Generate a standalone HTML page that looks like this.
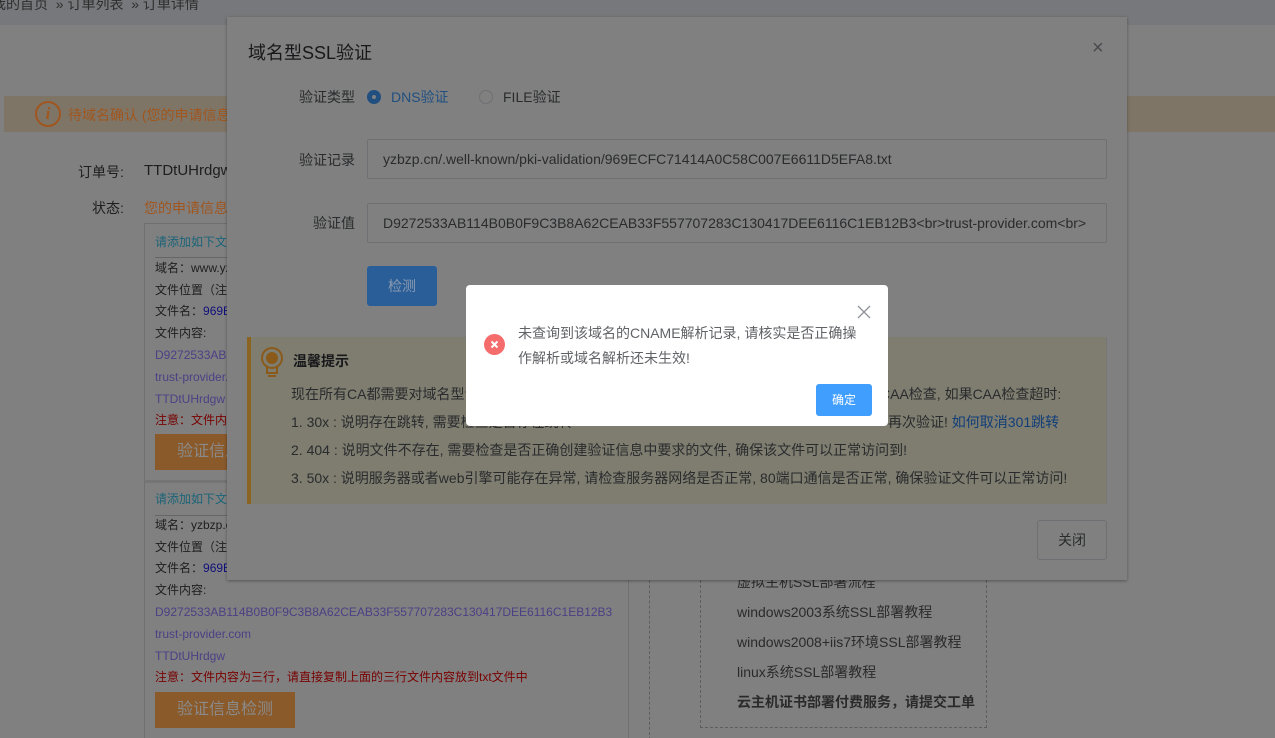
<!DOCTYPE html>
<html><head><meta charset="utf-8"><style>
*{margin:0;padding:0;box-sizing:border-box}
html,body{width:1275px;height:738px;overflow:hidden}
body{position:relative;background:#808080;font-family:"Liberation Sans","Noto Sans CJK SC",sans-serif;font-size:13px;color:#1e1e1e}
.a{position:absolute;white-space:nowrap}
</style></head><body>
<div class="a" style="left:0;top:0;width:1275px;height:25px;background:#77787b"></div>
<div class="a" style="left:-8px;top:-6px;font-size:14px;color:#2e2e2e">我的首页 &nbsp;» 订单列表 &nbsp;» 订单详情</div>
<div class="a" style="left:4px;top:96px;width:1271px;height:36px;background:#7f7566"></div>
<div class="a" style="left:35px;top:101px;width:26px;height:26px;border:2px solid #a0561e;border-radius:50%;color:#a0561e;font:italic bold 17px 'Liberation Serif',serif;text-align:center;line-height:22px">i</div>
<div class="a" style="left:68px;top:105px;font-size:14px;color:#a0561e">待域名确认 (您的申请信息</div>
<div class="a" style="left:78px;top:162px;font-size:14px">订单号:</div>
<div class="a" style="left:144px;top:162px;font-size:15px">TTDtUHrdgw</div>
<div class="a" style="left:92px;top:198px;font-size:14px">状态:</div>
<div class="a" style="left:144px;top:198px;font-size:14px;color:#a0561e">您的申请信息</div>
<div class="a" style="left:144px;top:223px;width:485px;height:530px;border:1px solid #6f6f6f"></div>
<div class="a" style="left:144px;top:480px;width:485px;height:3px;background:#747474"></div>
<div class="a" style="left:155px;top:257px;width:460px;height:1px;background:#666"></div>
<div class="a" style="left:155px;top:515px;width:460px;height:1px;background:#666"></div>
<div style="position:absolute;left:155px;top:232px;font-size:12px;line-height:21.8px">
<div style="color:#1a6478">请添加如下文件</div><div style="height:4px"></div>
<div>域名：www.yzbzp.cn</div><div>文件位置（注</div><div>文件名：<span style="color:#10107a">969E</span></div><div>文件内容:</div>
<div style="color:#4c3f85">D9272533AB114B0B0F9C3B8A62CEAB</div><div style="color:#4c3f85">trust-provider.com</div><div style="color:#4c3f85">TTDtUHrdgw</div><div style="color:#780000">注意：文件内容为三行</div>
</div>
<div class="a" style="left:155px;top:434px;width:115px;height:36px;background:#8a5a2a;color:#8a8a8a;font-size:16px;line-height:36px;padding-left:22px">验证信息检测</div>
<div style="position:absolute;left:155px;top:489px;font-size:12px;line-height:21.8px">
<div style="color:#1a6478">请添加如下文件</div><div style="height:4px"></div>
<div>域名：yzbzp.cn</div><div>文件位置（注</div><div>文件名：<span style="color:#10107a">969E</span></div><div>文件内容:</div>
<div style="color:#4c3f85">D9272533AB114B0B0F9C3B8A62CEAB33F557707283C130417DEE6116C1EB12B3</div><div style="color:#4c3f85">trust-provider.com</div><div style="color:#4c3f85">TTDtUHrdgw</div><div style="color:#780000">注意：文件内容为三行，请直接复制上面的三行文件内容放到txt文件中</div>
</div>
<div class="a" style="left:155px;top:692px;width:140px;height:36px;background:#8a5a2a;color:#8a8a8a;font-size:16px;line-height:36px;text-align:center">验证信息检测</div>
<div class="a" style="left:649px;top:560px;width:1px;height:180px;border-left:1px dashed #5e5e5e"></div>
<div class="a" style="left:700px;top:540px;width:287px;height:188px;border:1px dashed #5e5e5e"></div>
<div style="position:absolute;left:737px;top:567px;font-size:14px;line-height:30px;color:#2a2a2a">
<div>虚拟主机SSL部署流程</div><div>windows2003系统SSL部署教程</div><div>windows2008+iis7环境SSL部署教程</div><div>linux系统SSL部署教程</div><div style="font-weight:bold">云主机证书部署付费服务，请提交工单</div></div>
<div class="a" style="left:227px;top:17px;width:900px;height:563px;background:#808080;box-shadow:0 1px 3px rgba(0,0,0,.35)"></div>
<div class="a" style="left:248px;top:39px;font-size:18px;color:#18181a">域名型SSL验证</div>
<div class="a" style="left:1092px;top:37px;font-size:20px;color:#484a4d">×</div>
<div class="a" style="left:299px;top:87px;font-size:14px;color:#2a2b2d">验证类型</div>
<div class="a" style="left:367px;top:90px;width:14px;height:14px;border-radius:50%;background:#204f80"><div style="position:absolute;left:5px;top:5px;width:4px;height:4px;border-radius:50%;background:#808080"></div></div>
<div class="a" style="left:391px;top:87px;font-size:14px;color:#204f80">DNS验证</div>
<div class="a" style="left:479px;top:90px;width:14px;height:14px;border-radius:50%;border:1px solid #6e6f73"></div>
<div class="a" style="left:503px;top:87px;font-size:14px;color:#2a2b2d">FILE验证</div>
<div class="a" style="left:299px;top:150px;font-size:14px;color:#2a2b2d">验证记录</div>
<div class="a" style="left:367px;top:139px;width:740px;height:40px;border:1px solid #6e6f73;border-radius:2px;font-size:14px;color:#2a2b2d;line-height:38px;padding-left:15px;overflow:hidden">yzbzp.cn/.well-known/pki-validation/969ECFC71414A0C58C007E6611D5EFA8.txt</div>
<div class="a" style="left:313px;top:213px;font-size:14px;color:#2a2b2d">验证值</div>
<div class="a" style="left:367px;top:203px;width:740px;height:40px;border:1px solid #6e6f73;border-radius:2px;font-size:14px;color:#2a2b2d;line-height:38px;padding-left:15px;overflow:hidden">D9272533AB114B0B0F9C3B8A62CEAB33F557707283C130417DEE6116C1EB12B3&lt;br&gt;trust-provider.com&lt;br&gt;</div>
<div class="a" style="left:367px;top:266px;width:70px;height:40px;background:#2a5e98;border-radius:3px;color:#8a9ab0;font-size:14px;line-height:40px;text-align:center">检测</div>
<div class="a" style="left:247px;top:337px;width:860px;height:167px;background:#7e7d70;border-left:4px solid #8a6420;border-right:1px solid #777"></div>
<svg class="a" style="left:260px;top:346px" width="24" height="34" viewBox="0 0 24 34"><circle cx="12" cy="12" r="10" fill="none" stroke="#8a5a1a" stroke-width="2"/><circle cx="12" cy="12" r="6" fill="#8a5a1a"/><path d="M7 21v6h10v-6M8 30h8" stroke="#8a5a1a" stroke-width="2" fill="none"/></svg>
<div class="a" style="left:293px;top:351px;font-size:14px;font-weight:bold;color:#18181a">温馨提示</div>
<div style="position:absolute;left:291px;top:380px;font-size:14px;line-height:28px;color:#2a2b2d">
<div>现在所有CA都需要对域名型证书进行CAA检查</div>
<div>1. 30x : 说明存在跳转, 需要检查是否存在跳转</div>
<div>2. 404 : 说明文件不存在, 需要检查是否正确创建验证信息中要求的文件, 确保该文件可以正常访问到!</div>
<div>3. 50x : 说明服务器或者web引擎可能存在异常, 请检查服务器网络是否正常, 80端口通信是否正常, 确保验证文件可以正常访问!</div></div>
<div class="a" style="left:880px;top:380px;font-size:14px;line-height:28px;color:#2a2b2d">CAA检查, 如果CAA检查超时:</div>
<div class="a" style="left:888px;top:408px;font-size:14px;line-height:28px;color:#2a2b2d">再次验证! <span style="color:#123e78">如何取消301跳转</span></div>
<div class="a" style="left:1037px;top:520px;width:70px;height:40px;border:1px solid #6e6f73;border-radius:3px;font-size:14px;color:#2a2b2d;line-height:38px;text-align:center">关闭</div>
<div class="a" style="left:466px;top:285px;width:422px;height:141px;background:#fff;border-radius:4px"></div>
<svg class="a" style="left:857px;top:305px" width="14" height="14"><path d="M1 1L13 13M13 1L1 13" stroke="#909399" stroke-width="1.3"/></svg>
<div class="a" style="left:484px;top:334px;width:21px;height:21px;border-radius:50%;background:#f56c6c"><svg width="21" height="21"><path d="M7.5 7.5L13.5 13.5M13.5 7.5L7.5 13.5" stroke="#fff" stroke-width="2"/></svg></div>
<div class="a" style="left:518px;top:321px;font-size:14px;line-height:25px;color:#606266">未查询到该域名的CNAME解析记录, 请核实是否正确操<br>作解析或域名解析还未生效!</div>
<div class="a" style="left:816px;top:384px;width:56px;height:32px;background:#409eff;border-radius:3px;color:#fff;font-size:12px;line-height:32px;text-align:center">确定</div>
</body></html>
